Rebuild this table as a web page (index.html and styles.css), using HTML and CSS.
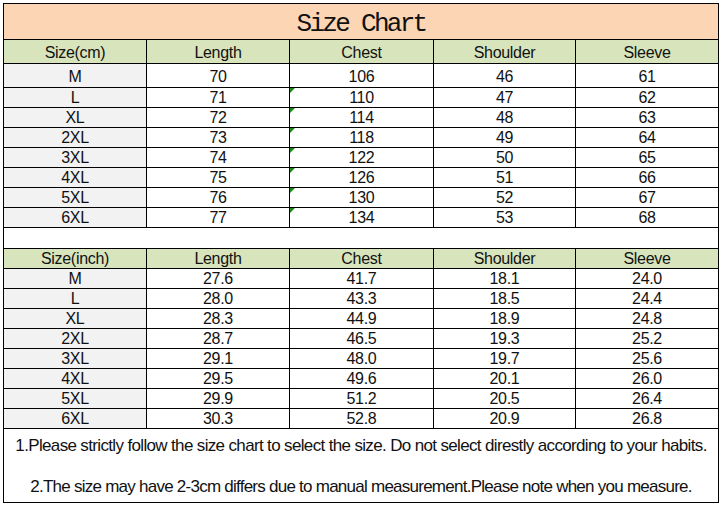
FILE: index.html
```html
<!DOCTYPE html>
<html>
<head>
<meta charset="utf-8">
<link rel="stylesheet" href="styles.css">
</head>
<body>
<table class="chart">
  <colgroup>
    <col class="c1"><col class="c2"><col class="c3"><col class="c4"><col class="c5">
  </colgroup>
  <tr class="title-row"><td colspan="5" class="title">Size Chart</td></tr>
  <tr class="head-row tall"><td>Size(cm)</td><td>Length</td><td>Chest</td><td>Shoulder</td><td>Sleeve</td></tr>
  <tr class="tall first"><td class="size">M</td><td>70</td><td>106</td><td>46</td><td>61</td></tr>
  <tr class="low"><td class="size">L</td><td>71</td><td class="flag">110</td><td>47</td><td>62</td></tr>
  <tr class="low"><td class="size">XL</td><td>72</td><td class="flag">114</td><td>48</td><td>63</td></tr>
  <tr class="low"><td class="size">2XL</td><td>73</td><td class="flag">118</td><td>49</td><td>64</td></tr>
  <tr class="low"><td class="size">3XL</td><td>74</td><td class="flag">122</td><td>50</td><td>65</td></tr>
  <tr class="low"><td class="size">4XL</td><td>75</td><td class="flag">126</td><td>51</td><td>66</td></tr>
  <tr class="low"><td class="size">5XL</td><td>76</td><td class="flag">130</td><td>52</td><td>67</td></tr>
  <tr class="low"><td class="size">6XL</td><td>77</td><td class="flag">134</td><td>53</td><td>68</td></tr>
  <tr class="blank"><td colspan="5"></td></tr>
  <tr class="head-row"><td>Size(inch)</td><td>Length</td><td>Chest</td><td>Shoulder</td><td>Sleeve</td></tr>
  <tr><td class="size">M</td><td>27.6</td><td>41.7</td><td>18.1</td><td>24.0</td></tr>
  <tr><td class="size">L</td><td>28.0</td><td>43.3</td><td>18.5</td><td>24.4</td></tr>
  <tr><td class="size">XL</td><td>28.3</td><td>44.9</td><td>18.9</td><td>24.8</td></tr>
  <tr><td class="size">2XL</td><td>28.7</td><td>46.5</td><td>19.3</td><td>25.2</td></tr>
  <tr><td class="size">3XL</td><td>29.1</td><td>48.0</td><td>19.7</td><td>25.6</td></tr>
  <tr><td class="size">4XL</td><td>29.5</td><td>49.6</td><td>20.1</td><td>26.0</td></tr>
  <tr><td class="size">5XL</td><td>29.9</td><td>51.2</td><td>20.5</td><td>26.4</td></tr>
  <tr><td class="size">6XL</td><td>30.3</td><td>52.8</td><td>20.9</td><td>26.8</td></tr>
  <tr class="notes-row"><td colspan="5" class="notes">
    <p class="note">1.Please strictly follow the size chart to select the size. Do not select direstly according to your habits.</p>
    <p class="note note2">2.The size may have 2-3cm differs due to manual measurement.Please note when you measure.</p>
  </td></tr>
</table>
</body>
</html>
```
FILE: styles.css
```css
html, body {
  margin: 0;
  padding: 0;
  background: #ffffff;
}
body {
  padding: 3px 0 0 3px;
}
.chart {
  border-collapse: collapse;
  table-layout: fixed;
  width: 715px;
  font-family: "Liberation Sans", Arial, sans-serif;
  font-size: 16px;
  color: #111;
  border: 1px solid #000;
}
.c1 { width: 143px; }
.c2 { width: 143px; }
.c3 { width: 144px; }
.c4 { width: 142px; }
.c5 { width: 143px; }
.chart td {
  border: 1px solid #000;
  padding: 0;
  text-align: center;
  vertical-align: middle;
  height: 19px;
  line-height: 18px;
  letter-spacing: -0.3px;
}
.chart tr.tall td {
  height: 21px;
  padding-top: 2px;
}
.chart tr.tall.first td {
  height: 20px;
  padding-top: 3px;
}
.chart tr.low td {
  height: 18px;
  padding-top: 1px;
}
.chart td.title {
  background: #fcd5b4;
  height: 29px;
  font-family: "Liberation Mono", "Courier New", monospace;
  font-size: 26px;
  font-weight: normal;
  letter-spacing: -2.7px;
  line-height: 29px;
  padding-top: 6px;
  color: #111;
}
.head-row td {
  background: #d8e4bc;
}
.chart td.size {
  background: #f2f2f2;
}
.chart tr.blank td {
  height: 20px;
  background: #fff;
}
.flag {
  position: relative;
}
.flag::before {
  content: "";
  position: absolute;
  left: 0;
  top: 0;
  width: 0;
  height: 0;
  border-top: 5px solid #1a8a1a;
  border-right: 5px solid transparent;
}
.chart td.notes {
  height: 73px;
  padding: 0;
}
.note {
  margin: 0;
  font-size: 17px;
  line-height: 19px;
  letter-spacing: -0.65px;
}
.note + .note {
  margin-top: 22px;
}
.note2 {
  letter-spacing: -0.75px;
}
```
